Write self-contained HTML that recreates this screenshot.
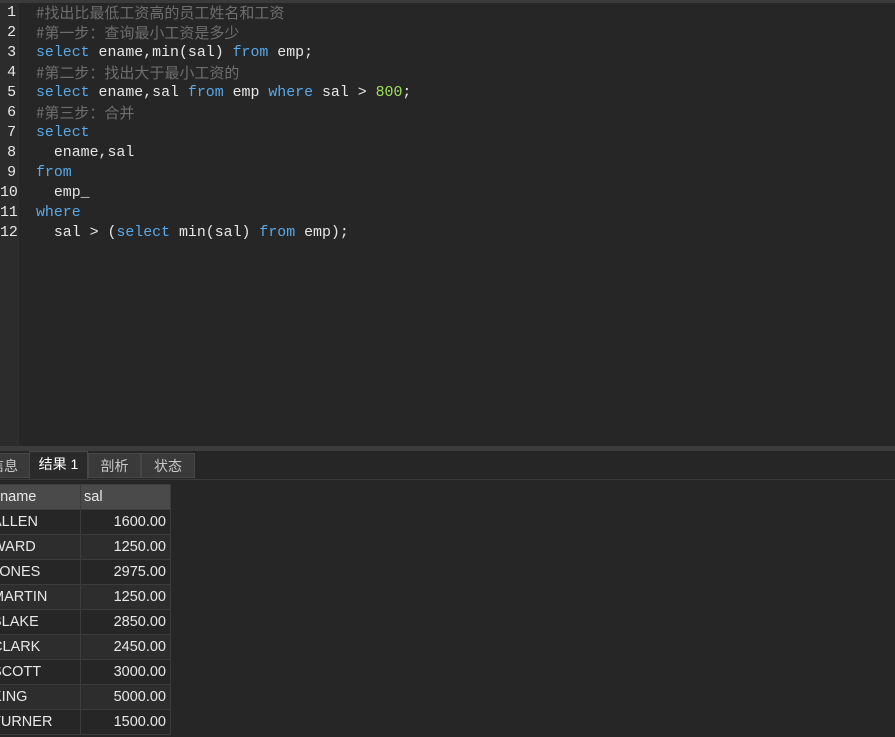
<!DOCTYPE html>
<html><head><meta charset="utf-8"><style>
body{margin:0;width:895px;height:737px;background:#262626;overflow:hidden;position:relative;font-family:"Liberation Sans","Noto Sans CJK SC",sans-serif}
.top{position:absolute;left:0;top:0;width:895px;height:3px;background:#3a3a3a}
.gutter{position:absolute;left:0;top:3px;width:19px;height:443px;background:#2c2c2c}
.code{position:absolute;left:0;top:3px;width:895px;height:440px;font-family:"Liberation Mono","Noto Sans CJK SC",monospace;font-size:14.9px;line-height:20px;color:#e6e6e6;white-space:pre}
.ln{position:absolute;left:0;width:16px;color:#e8e8e8;text-align:right}
.l{position:absolute;left:36px}
.c{color:#6e6e6e;font-family:"Noto Sans CJK SC",sans-serif;font-size:15px}
.k{color:#5aa8e6}.n{color:#9ee05a}
.sep{position:absolute;left:0;top:446px;width:895px;height:5px;background:#3c3c3c}
.tabs{position:absolute;left:0;top:451px;width:895px;height:28px;background:#262626;border-bottom:1px solid #3a3a3a}
.tab{position:absolute;top:2px;height:25px;background:#3a3a3a;border:1px solid #474747;color:#c8c8c8;font-size:14px;line-height:25px;text-align:center;box-sizing:border-box}
.tab.a{background:#2a2a2a;color:#fff;top:0;height:28px;border-bottom:none}
table{position:absolute;left:-1px;top:484px;border-collapse:collapse;font-size:14.5px;color:#e8e8e8;table-layout:fixed;width:171px}
td{height:24px;padding:0;border:1px solid #3c3c3c;line-height:24px;box-sizing:border-box}
td.a{width:81px;text-indent:-8px;overflow:hidden;white-space:nowrap}
td.b{width:90px;text-align:right;padding-right:4px}
tr.h td{background:#4a4a4a}
tr.h td.b{text-align:left;padding-left:3px}
tr:nth-child(odd):not(.h) td{background:#2d2d2d}
</style></head><body>
<div class="top"></div>
<div class="gutter"></div>
<div class="code">
<div class="ln" style="top:0">1</div><div class="ln" style="top:20px">2</div><div class="ln" style="top:40px">3</div><div class="ln" style="top:60px">4</div><div class="ln" style="top:80px">5</div><div class="ln" style="top:100px">6</div><div class="ln" style="top:120px">7</div><div class="ln" style="top:140px">8</div><div class="ln" style="top:160px">9</div><div class="ln" style="top:180px">10</div><div class="ln" style="top:200px">11</div><div class="ln" style="top:220px">12</div>
<div class="l c" style="top:0">#找出比最低工资高的员工姓名和工资</div>
<div class="l c" style="top:20px">#第一步：查询最小工资是多少</div>
<div class="l" style="top:40px"><span class="k">select</span> ename,min(sal) <span class="k">from</span> emp;</div>
<div class="l c" style="top:60px">#第二步：找出大于最小工资的</div>
<div class="l" style="top:80px"><span class="k">select</span> ename,sal <span class="k">from</span> emp <span class="k">where</span> sal &gt; <span class="n">800</span>;</div>
<div class="l c" style="top:100px">#第三步：合并</div>
<div class="l k" style="top:120px">select</div>
<div class="l" style="top:140px">  ename,sal</div>
<div class="l k" style="top:160px">from</div>
<div class="l" style="top:180px">  emp_</div>
<div class="l k" style="top:200px">where</div>
<div class="l" style="top:220px">  sal &gt; (<span class="k">select</span> min(sal) <span class="k">from</span> emp);</div>
</div>
<div class="sep"></div>
<div class="tabs">
<div class="tab" style="left:-22px;width:52px">信息</div>
<div class="tab a" style="left:29px;width:59px">结果 1</div>
<div class="tab" style="left:88px;width:53px">剖析</div>
<div class="tab" style="left:141px;width:54px">状态</div>
</div>
<table>
<tr class="h"><td class="a">ename</td><td class="b">sal</td></tr>
<tr><td class="a">ALLEN</td><td class="b">1600.00</td></tr>
<tr><td class="a">WARD</td><td class="b">1250.00</td></tr>
<tr><td class="a">JONES</td><td class="b">2975.00</td></tr>
<tr><td class="a">MARTIN</td><td class="b">1250.00</td></tr>
<tr><td class="a">BLAKE</td><td class="b">2850.00</td></tr>
<tr><td class="a">CLARK</td><td class="b">2450.00</td></tr>
<tr><td class="a">SCOTT</td><td class="b">3000.00</td></tr>
<tr><td class="a">KING</td><td class="b">5000.00</td></tr>
<tr><td class="a">TURNER</td><td class="b">1500.00</td></tr>
</table>
</body></html>
